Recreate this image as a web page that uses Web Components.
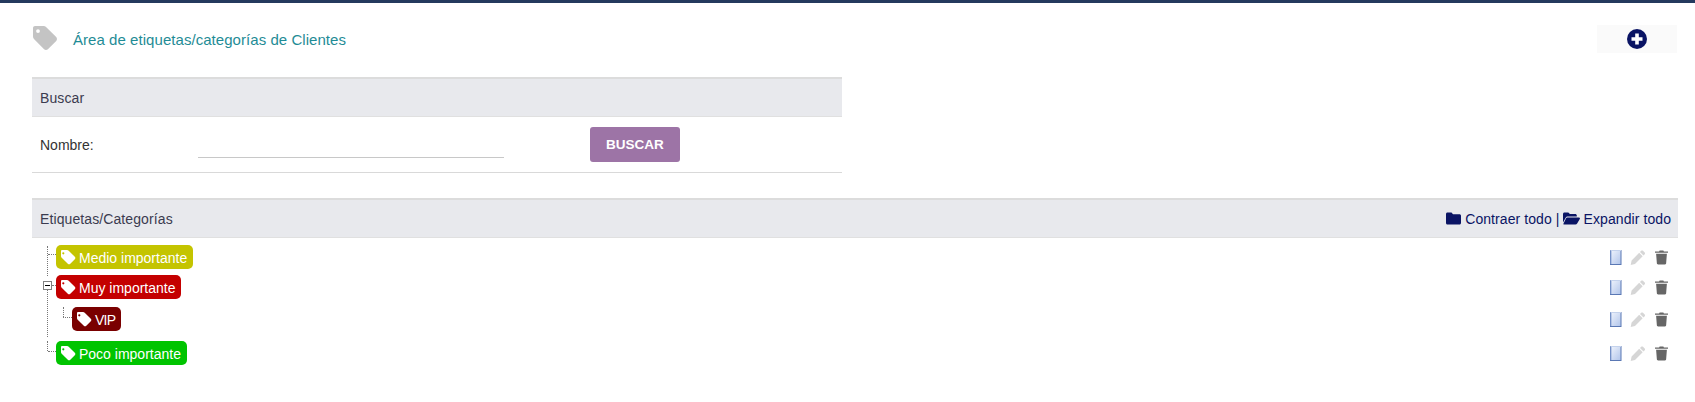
<!DOCTYPE html>
<html lang="es"><head><meta charset="utf-8"><title>Etiquetas</title>
<style>
html,body{margin:0;padding:0;background:#fff}
body{font-family:"Liberation Sans",Arial,sans-serif;font-size:14px;color:#333;height:402px;overflow:hidden}
</style></head><body>
<app-page>
  <page-head slot="head" title-text="Área de etiquetas/categorías de Clientes"></page-head>
  <search-panel slot="search"></search-panel>
  <tag-panel slot="tree">
    <tree-row color="#c4c400" label="Medio importante" first></tree-row>
    <tree-row color="#c40000" label="Muy importante" toggle gap="6"></tree-row>
    <tree-row color="#7a0000" label="VIP" child gap="8" track="-.8px"></tree-row>
    <tree-row color="#00c400" label="Poco importante" last gap="10"></tree-row>
  </tag-panel>
</app-page>
<script>
function def(name,css,html){
  customElements.define(name,class extends HTMLElement{
    constructor(){super();this.attachShadow({mode:'open'});}
    connectedCallback(){
      const a=n=>this.getAttribute(n);
      this.shadowRoot.innerHTML='<style>'+css+'</style>'+(typeof html==='function'?html(a,this):html);
    }
  });
}
def('app-page',`:host{display:block;border-top:3px solid #243a5e;padding:0 17px 0 32px}
`,`<slot name="head"></slot><slot name="search"></slot><slot name="tree"></slot>`);

def('page-head',`:host{display:flex;align-items:center;height:74px;box-sizing:border-box}
svg{display:block;width:26px;height:26px;margin:-4px 14px 0 0}
h1{font:400 15px "Liberation Sans",Arial,sans-serif;letter-spacing:.05px;color:#1f8c96;margin:0 0 2px 1px;flex:1}
.add{width:80px;height:28px;background:#fafafa;display:flex;align-items:center;justify-content:center;margin-right:1px;position:relative;top:-1px}
.add svg{width:20px;height:20px;margin:0}`,
a=>`<svg viewBox="0 0 26 26"><path fill="#c4c4c4" fill-rule="evenodd" d="M1 3C1 1.900 1.900 1 3 1H11.500C12.600 1 13.500 1.400 14.300 2.200L24.200 12.100C25.200 13.100 25.200 14.900 24.200 15.900L15.900 24.200C14.900 25.200 13.100 25.200 12.100 24.200L2.200 14.300C1.400 13.500 1 12.600 1 11.500ZM6 4.200A1.900 1.900 0 1 0 6 8A1.900 1.900 0 1 0 6 4.200Z"/></svg>
<h1>${a('title-text')}</h1>
<div class="add"><svg viewBox="0 0 20 20"><circle cx="10" cy="10" r="10" fill="#0a1464"/><path fill="#fff" d="M8.200 4.500h3.600v3.700h3.700v3.600h-3.700v3.700H8.200v-3.700H4.500V8.200h3.700z"/></svg></div>`);

def('panel-head',`:host{display:flex;align-items:center;justify-content:space-between;height:37px;background:#e8e9ed;border-top:2px solid #dcdcdc;border-bottom:1px solid #e0e0e0;padding:0 7px 0 8px;font-size:14px;letter-spacing:.1px;color:#3b3b4f}`,
`<slot></slot><slot name="right"></slot>`);

def('search-panel',`:host{display:block;width:810px}
.row{display:flex;align-items:center;height:55px;border-bottom:1px solid #d9d9d9;padding-left:8px}
label{width:158px;font-size:14px;color:#333}
.inp{width:306px;height:26px;border-bottom:1px solid #c8c8c8;box-sizing:border-box}
input{all:unset;width:100%;height:100%;display:block}
button{all:unset;box-sizing:border-box;width:90px;height:35px;margin-left:86px;background:#9d74a6;border-radius:3px;color:#fff;font:700 13.5px "Liberation Sans",Arial,sans-serif;text-align:center;line-height:35px}`,
`<panel-head>Buscar</panel-head>
<div class="row"><label>Nombre:</label><div class="inp"><input type="text" aria-label="Nombre"></div><button>BUSCAR</button></div>`);

def('tag-panel',`:host{display:block;margin-top:25px;width:1646px}
.tree{position:relative;padding-top:7px}`,
`<panel-head>Etiquetas/Categorías<span slot="right" style="display:flex;align-items:center;color:#0a1464;letter-spacing:.08px;white-space:pre">
<svg style="display:block;width:15px;height:13px;margin-right:4px" viewBox="0 0 15 13"><path fill="#0a1464" d="M0 2C0 1.200.6.500 1.500.500H5.500L7 2.200H13.500C14.300 2.200 15 2.900 15 3.700V11C15 11.800 14.300 12.500 13.500 12.500H1.500C.6 12.500 0 11.800 0 11Z"/></svg>Contraer todo<span style="margin:0 3px 0 4px">|</span><svg style="display:block;width:17px;height:13px;margin-right:4px" viewBox="0 0 16 13" preserveAspectRatio="none"><path fill="#0a1464" d="M0 2C0 1.200.6.500 1.400.500H5L6.500 2H11.500C12.300 2 13 2.700 13 3.500V4.500H4.500C3.600 4.500 2.900 5 2.500 5.800L0 10.500Z"/><path fill="#0a1464" d="M4 5.500H15C15.800 5.500 16.200 6.200 15.800 6.900L13.300 11.500C13 12.100 12.400 12.500 11.700 12.500H1C.5 12.500.2 12 .5 11.500L2.900 6.300C3.100 5.800 3.500 5.500 4 5.500Z"/></svg>Expandir todo</span></panel-head>
<div class="tree"><slot></slot></div>`);

def('tree-row',`:host{display:flex;align-items:center;height:24px;position:relative;padding-right:10px}
.pill{display:inline-flex;align-items:center;height:24px;box-sizing:border-box;border-radius:5px;padding:0 6px 0 4px;color:#fff;font-size:14px;white-space:nowrap}
.pill svg{width:16px;height:16px;display:block;margin:-1px 3px 0 0}
.sp{flex:1}
.h{position:absolute;height:0;border-top:1px dotted #777}
.v{position:absolute;width:0;border-left:1px dotted #777}
.t{position:absolute;left:11px;top:6px;width:9px;height:9px;box-sizing:border-box;border:1px solid #808080;background:#fff}
.t::after{content:"";position:absolute;left:1px;top:3px;width:5px;height:1px;background:#000}`,
(a,el)=>{
 const child=el.hasAttribute('child'), first=el.hasAttribute('first'), tog=el.hasAttribute('toggle'), last=el.hasAttribute('last');
 el.style.marginTop=(a('gap')||0)+'px';
 el.style.paddingLeft=(child?40:24)+'px';
 let lines='';
 if(child){
   lines=`<i class="v" style="left:31px;top:0;height:10px"></i><i class="h" style="left:31px;top:10px;width:9px"></i>`;
 }else if(first){
   lines=`<i class="v" style="left:15px;top:1px;height:30px"></i><i class="h" style="left:16px;top:9px;width:8px"></i>`;
 }else if(tog){
   lines=`<i class="v" style="left:15px;top:15px;height:47px"></i><i class="h" style="left:20px;top:10px;width:4px"></i><span class="t"></span>`;
 }else if(last){
   lines=`<i class="v" style="left:15px;top:0;height:10px"></i><i class="h" style="left:16px;top:10px;width:8px"></i>`;
 }
 const tr=a('track')?`letter-spacing:${a('track')};`:'';
 return lines+`<span class="pill" style="background:${a('color')};${tr}"><svg viewBox="0 0 16 16"><path fill="#fff" fill-rule="evenodd" d="M1 2.200C1 1.500 1.500 1 2.200 1H7C7.700 1 8.200 1.200 8.700 1.700L14.800 7.800C15.500 8.500 15.500 9.600 14.800 10.300L10.300 14.800C9.600 15.500 8.500 15.500 7.800 14.800L1.700 8.700C1.200 8.200 1 7.700 1 7ZM3.300 3.200A1.100 1.100 0 1 0 3.300 5.400A1.100 1.100 0 1 0 3.300 3.200Z"/></svg><span style="position:relative;top:.5px">${a('label')}</span></span><span class="sp"></span><row-actions></row-actions>`;
});

def('row-actions',`:host{display:flex;align-items:center;margin-top:1px}
svg{display:block}`,
`<svg width="12" height="15" viewBox="0 0 12 15" style="margin-right:8px"><defs><linearGradient id="g" x1="0" y1="0" x2="1" y2="1"><stop offset="0" stop-color="#f0f4fc"/><stop offset="1" stop-color="#b0c4ea"/></linearGradient></defs><rect x=".5" y=".5" width="10.500" height="14" fill="url(#g)" stroke="#5a78b4"/><path d="M1 1v13" stroke="#8fa8d8"/><path d="M.5.500H11" stroke="#c4d2ec"/></svg>
<svg width="16" height="15" viewBox="0 0 16 15" style="margin-right:9px"><path fill="#d6d6d6" d="M11.200.800c.5-.5 1.300-.5 1.800 0l1.700 1.700c.5.500.5 1.300 0 1.800l-1.200 1.200-3.500-3.500zM9.200 2.800l3.500 3.500-7.700 7.700-4.300 1 .9-4.400z"/></svg>
<svg width="13" height="15" viewBox="0 0 14 15"><path fill="#666" d="M5 0h4l.6 1H14v1.500H0V1h4.400zM1.200 3.500h11.600l-.8 10.200c-.1.800-.6 1.300-1.400 1.300H3.400c-.8 0-1.300-.5-1.400-1.300z"/></svg>`);
</script>
</body></html>
